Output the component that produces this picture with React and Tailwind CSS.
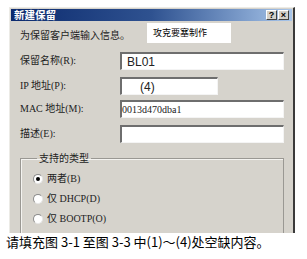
import React from "react";

const CJK = { fontFamily: '"Liberation Serif", "Noto Sans CJK SC", serif' };
const SANS = { fontFamily: '"Noto Sans CJK SC", "Liberation Sans", sans-serif' };

function Field({ label, w = "w-[164px]", mt, children }) {
  return (
    <div className={`flex items-center h-[18px] ${mt}`}>
      <div className="w-[100px] text-[10px] leading-[12px] text-[#222]" style={CJK}>
        {label}
      </div>
      <div
        className={`${w} h-full bg-white border-t-2 border-l-2 border-t-[#6e6e6e] border-l-[#6e6e6e] border-r border-b border-r-[#f4f4f4] border-b-[#f4f4f4] flex items-center overflow-hidden`}
      >
        {children}
      </div>
    </div>
  );
}

function Radio({ checked, label, mt }) {
  return (
    <div className={`flex items-center h-[12px] ${mt}`}>
      <div className="w-[10px] h-[10px] rounded-full bg-white border border-t-[#8a8a8a] border-l-[#8a8a8a] border-r-[#e6e6e6] border-b-[#e6e6e6] flex items-center justify-center">
        {checked && <div className="w-[4px] h-[4px] rounded-full bg-black" />}
      </div>
      <div className="ml-[4px] text-[10px] leading-[12px] text-[#222]" style={CJK}>
        {label}
      </div>
    </div>
  );
}

export default function App() {
  return (
    <div className="w-[307px] h-[259px] bg-white overflow-hidden relative">
      <div className="ml-[9px] mt-[7px] w-[286px] h-[226px] bg-[#d6d3cc] border-t border-l border-t-[#ecebe6] border-l-[#ecebe6] border-r-2 border-r-[#3a3a3a] overflow-hidden flex flex-col">
        {/* title bar */}
        <div className="mt-[1px] ml-[1px] mr-[1px] h-[14px] flex items-center bg-gradient-to-r from-[#0c2a6e] via-[#2f5290] to-[#a9c6ea]">
          <span className="ml-[3px] text-white font-bold text-[10.5px] leading-[12px]" style={SANS}>
            新建保留
          </span>
          <div className="ml-auto mr-[3px] flex gap-[1px]">
            <div className="w-[11px] h-[10px] bg-[#d4d0c8] border-t border-l border-white border-r border-b border-r-[#404040] border-b-[#404040] flex items-center justify-center text-[9px] font-bold leading-none text-black" style={{ fontFamily: '"Liberation Sans", sans-serif' }}>
              ?
            </div>
            <div className="w-[11px] h-[10px] bg-[#d4d0c8] border-t border-l border-white border-r border-b border-r-[#404040] border-b-[#404040] flex items-center justify-center text-[9px] font-bold leading-none text-black" style={{ fontFamily: '"Liberation Sans", sans-serif' }}>
              ×
            </div>
          </div>
        </div>

        {/* content */}
        <div className="pl-[10px] flex flex-col">
          <div className="mt-[7px] h-[14px] text-[10px] leading-[14px] text-[#222]" style={SANS}>
            为保留客户端输入信息。
          </div>
          <Field label="保留名称(R):" mt="mt-[10px]">
            <span className="ml-[5px] text-[12px] text-[#222]" style={{ fontFamily: '"Liberation Sans", sans-serif' }}>
              BL01
            </span>
          </Field>
          <Field label="IP 地址(P):" w="w-[98px]" mt="mt-[7px]">
            <span className="ml-[18px] text-[12px] text-[#222]" style={{ fontFamily: '"Liberation Sans", sans-serif' }}>
              (4)
            </span>
          </Field>
          <Field label="MAC 地址(M):" mt="mt-[5px]">
            <span className="ml-[0px] text-[10px] text-[#222]" style={{ fontFamily: '"Liberation Serif", serif' }}>
              0013d470dba1
            </span>
          </Field>
          <Field label="描述(E):" mt="mt-[7px]" />

          <fieldset className="mt-[9px] w-[264px] h-[110px] border border-[#9a9893] shadow-[inset_1px_1px_0_#f4f3f0] pl-[12px]">
            <legend className="ml-[4px] px-[2px] text-[10px] leading-[12px] text-[#222]" style={SANS}>
              支持的类型
            </legend>
            <Radio checked label="两者(B)" mt="mt-[9px]" />
            <Radio label="仅 DHCP(D)" mt="mt-[8px]" />
            <Radio label="仅 BOOTP(O)" mt="mt-[8px]" />
          </fieldset>
        </div>
      </div>

      <div className="ml-[6px] mt-[1px] h-[16px] text-[13px] leading-[16px] text-black whitespace-nowrap" style={SANS}>
        请填充图 3-1 至图 3-3 中(1)～(4)处空缺内容。
      </div>

      {/* watermark overlay */}
      <div className="absolute left-[147px] top-[23px] w-[84px] h-[20px] bg-white flex items-center">
        <span className="ml-[6px] text-[9px] leading-[10px] text-black" style={SANS}>
          攻克要塞制作
        </span>
      </div>
    </div>
  );
}
